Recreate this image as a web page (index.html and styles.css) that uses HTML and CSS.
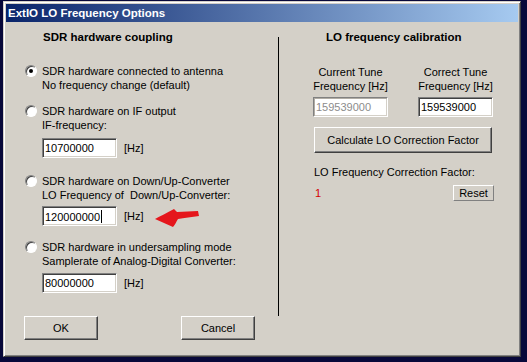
FILE: index.html
```html
<!DOCTYPE html>
<html lang="en">
<head>
    <meta charset="UTF-8">
    <title>ExtIO LO Frequency Options</title>
    <link rel="stylesheet" href="styles.css">
</head>
<body>

<div class="dialog">
    <div class="title-bar">ExtIO LO Frequency Options</div>
    <div class="dialog-body">
        <div class="coupling">
            <h2 class="group-title">SDR hardware coupling</h2>

            <div class="option first">
                <span class="radio checked"></span>
                <div class="option-text">
                    <div>SDR hardware connected to antenna</div>
                    <div>No frequency change (default)</div>
                </div>
            </div>

            <div class="option second">
                <span class="radio"></span>
                <div class="option-text">
                    <div>SDR hardware on IF output</div>
                    <div>IF-frequency:</div>
                </div>
            </div>
            <div class="freq-row row-if">
                <input class="field" type="text" value="10700000">
                <span class="unit">[Hz]</span>
            </div>

            <div class="option third">
                <span class="radio"></span>
                <div class="option-text">
                    <div>SDR hardware on Down/Up-Converter</div>
                    <div>LO Frequency of&nbsp; Down/Up-Converter:</div>
                </div>
            </div>
            <div class="freq-row row-lo">
                <div class="field caret">120000000</div>
                <span class="unit">[Hz]</span>
                <svg class="arrow" width="46" height="20" viewBox="0 0 46 20">
                    <path d="M1,11 C6,8 13,5 20,1 L23,4 C30,4 37,3 44,3 L45,8 C38,9 30,10 24,11 C22,14 21,17 19,19 C13,16 7,14 1,11 Z" fill="#e5161c"/>
                </svg>
            </div>

            <div class="option fourth">
                <span class="radio"></span>
                <div class="option-text">
                    <div>SDR hardware in undersampling mode</div>
                    <div>Samplerate of Analog-Digital Converter:</div>
                </div>
            </div>
            <div class="freq-row row-adc">
                <input class="field" type="text" value="80000000">
                <span class="unit">[Hz]</span>
            </div>

            <div class="dialog-buttons">
                <button class="btn">OK</button>
                <button class="btn">Cancel</button>
            </div>
        </div>

        <div class="divider"></div>

        <div class="calibration">
            <h2 class="group-title">LO frequency calibration</h2>
            <div class="tune-grid">
                <div class="tune-col">
                    <div class="tune-label">Current Tune<br>Frequency [Hz]</div>
                    <input class="field disabled" type="text" value="159539000" disabled>
                </div>
                <div class="tune-col">
                    <div class="tune-label">Correct Tune<br>Frequency [Hz]</div>
                    <input class="field" type="text" value="159539000">
                </div>
            </div>
            <button class="btn calc-btn">Calculate LO Correction Factor</button>
            <div class="factor-label">LO Frequency Correction Factor:</div>
            <div class="factor-row">
                <span class="factor-value">1</span>
                <button class="btn reset-btn">Reset</button>
            </div>
        </div>
    </div>
</div>

</body>
</html>
```

FILE: styles.css
```css
body {
    margin: 0;
    background-color: #08083a;
    font-family: "Liberation Sans", Arial, sans-serif;
    font-size: 11px;
    color: #000000;
}
.dialog {
    box-sizing: border-box;
    width: 518px;
    height: 356px;
    margin: 1px 0 0 3px;
    padding: 2px;
    background-color: #d4d0c8;
    border: 1px solid;
    border-color: #d4d0c8 #404040 #404040 #d4d0c8;
    box-shadow: inset 1px 1px #ffffff, inset -1px -1px #808080;
}
.title-bar {
    height: 18px;
    line-height: 18px;
    padding-left: 2px;
    background: linear-gradient(to right, #0a246a, #a6caf0);
    color: white;
    font-weight: bold;
    font-size: 11.5px;
}
.dialog-body {
    display: flex;
}
.coupling {
    width: 272px;
    line-height: 14px;
}
.group-title {
    margin: 0;
    height: 14px;
    line-height: 14px;
    font-size: 11.5px;
    font-weight: bold;
}
.coupling .group-title {
    padding: 8px 0 0 37px;
}
.option {
    display: flex;
    padding-left: 19px;
}
.option.first { margin-top: 20px; }
.option.second { margin-top: 12px; }
.option.third { margin-top: 16px; }
.option.fourth { margin-top: 14px; }
.option-text {
    margin-left: 5px;
}
.radio {
    position: relative;
    box-sizing: border-box;
    width: 12px;
    height: 12px;
    margin-top: 1px;
    border-radius: 50%;
    background: white;
    border: 1px solid;
    border-color: #808080 #ffffff #ffffff #808080;
    box-shadow: inset 1px 1px #404040;
}
.radio.checked::after {
    content: "";
    position: absolute;
    left: 3px;
    top: 3px;
    width: 4px;
    height: 4px;
    border-radius: 50%;
    background: black;
}
.freq-row {
    display: flex;
    align-items: center;
    padding-left: 36px;
    height: 20px;
}
.row-if { margin-top: 6px; }
.row-lo { margin-top: 4px; }
.row-adc { margin-top: 5px; }
.field {
    box-sizing: border-box;
    width: 75px;
    height: 20px;
    margin: 0;
    padding: 0 2px;
    font-family: "Liberation Sans", Arial, sans-serif;
    font-size: 11px;
    line-height: 16px;
    color: black;
    background: white;
    border: 1px solid;
    border-color: #808080 #ffffff #ffffff #808080;
    box-shadow: inset 1px 1px #404040, inset -1px -1px #d4d0c8;
    outline: none;
}
div.field {
    padding-top: 2px;
}
.caret::after {
    content: "";
    display: inline-block;
    width: 1px;
    height: 13px;
    margin-left: 1px;
    vertical-align: -2px;
    background: black;
}
.field.disabled {
    color: #8c8c8c;
    box-shadow: inset 1px 1px #b0aca4, inset -1px -1px #d4d0c8;
}
.unit {
    margin-left: 7px;
}
.arrow {
    margin-left: 10px;
    margin-top: 4px;
}
.dialog-buttons {
    display: flex;
    gap: 83px;
    margin-top: 23px;
    padding-left: 18px;
}
.btn {
    box-sizing: border-box;
    width: 74px;
    height: 24px;
    margin: 0;
    padding: 0;
    font-family: "Liberation Sans", Arial, sans-serif;
    font-size: 11px;
    color: black;
    background: #d4d0c8;
    border: 1px solid;
    border-color: #ffffff #404040 #404040 #ffffff;
    box-shadow: inset -1px -1px #808080;
}
.divider {
    width: 1px;
    height: 279px;
    margin-top: 15px;
    background: black;
}
.calibration {
    width: 237px;
    line-height: 14px;
}
.calibration .group-title {
    padding: 8px 0 0 47px;
}
.tune-grid {
    display: flex;
    gap: 30px;
    margin-top: 21px;
    padding-left: 34px;
}
.tune-col {
    width: 75px;
}
.tune-label {
    width: 95px;
    margin-left: -10px;
    margin-bottom: 4px;
    text-align: center;
}
.calc-btn {
    display: block;
    width: 178px;
    height: 26px;
    margin: 10px 0 0 35px;
}
.factor-label {
    margin: 12px 0 0 35px;
}
.factor-row {
    display: flex;
    justify-content: space-between;
    align-items: center;
    width: 179px;
    margin: 6px 0 0 36px;
}
.factor-value {
    color: #d40000;
}
.reset-btn {
    width: 41px;
    height: 16px;
    line-height: 12px;
    box-shadow: none;
    border-color: #ffffff #808080 #808080 #ffffff;
}
```
